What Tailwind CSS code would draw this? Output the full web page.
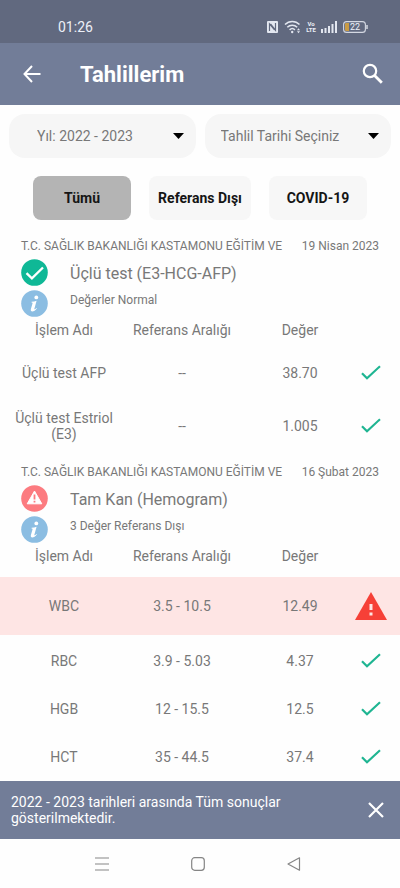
<!DOCTYPE html>
<html lang="tr">
<head>
<meta charset="utf-8">
<meta name="viewport" content="width=device-width, initial-scale=1">
<title>Tahlillerim</title>
<script src="https://cdn.jsdelivr.net/npm/@tailwindcss/browser@4"></script>
</head>
<body class="flex h-screen flex-col bg-[#fefefe] font-['Roboto','Noto_Sans',sans-serif] text-[#787878]">
<svg class="hidden" aria-hidden="true">
  <symbol id="tick" viewBox="0 0 20 16"><path d="M1 8.2l5 5L19 1.2" fill="none" stroke="#1fb592" stroke-width="2.2"/></symbol>
  <symbol id="info" viewBox="0 0 27 27"><circle cx="13.500" cy="13.500" r="13.300" fill="#8bbde2"/><circle cx="15.300" cy="7.400" r="1.900" fill="#fff"/><path d="M10.600 11.800c1.700-.1 3.300-.5 5-1.100l-2.300 8.200c-.2.800.7.500 2.100-1l.5.500c-1.500 2-3.100 3-4.600 3-1.300 0-1.800-.9-1.400-2.300l1.600-5.500c.2-.8-.1-1-1.100-1z" fill="#fff"/></symbol>
</svg>

<div class="flex h-[43px] shrink-0 items-center justify-between bg-[#61697f] pt-[10px] pr-8 pl-[58px] text-[#edf0f8]">
  <span class="text-sm">01:26</span>
  <div class="flex items-center gap-[6px]">
    <svg class="h-3 w-[11px]" viewBox="0 0 11 12"><rect width="11" height="12" rx="1" fill="#e3e7f0"/><path d="M2.500 10V2.800l5 6M8.500 2v7.200L3.500 3" fill="none" stroke="#61697f" stroke-width="1.200"/></svg>
    <svg class="h-[14px] w-[17px]" viewBox="0 0 17 14" fill="none" stroke="#e3e7f0" stroke-width="1.500"><path d="M1 4.600C5 .3 11.500.3 15.500 4.600M3.300 7.300c2.800-2.900 7.100-2.900 9.900 0M5.600 9.900c1.500-1.500 3.800-1.500 5.300 0"/><circle cx="8.200" cy="12" r="1.200" fill="#e3e7f0" stroke="none"/><path d="M13 10.300l1.500-2 1.500 2zM13 11.300l1.500 2 1.500-2z" fill="#e3e7f0" stroke="none"/></svg>
    <span class="flex w-2 flex-col items-center text-[6px] leading-[6px] font-bold"><span>Vo</span><span>LTE</span></span>
    <svg class="h-3 w-4" viewBox="0 0 16 12" fill="#e3e7f0"><path d="M0 8h2v4H0zM3.500 7h2v5h-2zM7 5h2v7H7zM10.500 3h2v9h-2zM14 0h2v12h-2z"/></svg>
    <span class="relative flex h-3 w-[25px] items-center">
      <svg class="absolute inset-0 h-3 w-[25px]" viewBox="0 0 25 12"><rect x=".6" y=".6" width="21.800" height="10.800" rx="3" fill="none" stroke="#d4d8e2" stroke-width="1.100"/><path d="M3 2h3v8H3q-1 0-1-1V3q0-1 1-1z" fill="#c99b45"/><path d="M24 4v4" stroke="#d4d8e2" stroke-width="1.500"/></svg>
      <span class="relative pl-[7px] text-[9px] leading-3">22</span>
    </span>
  </div>
</div>

<header class="flex h-[62px] shrink-0 items-center bg-[#727d98] pr-4 pl-5 text-white">
  <button aria-label="Geri" class="mr-9 flex size-6 items-center justify-center"><svg class="h-[18px] w-[18px]" viewBox="0 0 18 18" fill="none" stroke="currentColor" stroke-width="2"><path d="M17.500 9H1.500M9 1L1.500 9 9 17"/></svg></button>
  <h1 class="grow text-[22px] font-bold">Tahlillerim</h1>
  <button aria-label="Ara"><svg class="size-6" viewBox="0 0 24 24" fill="none" stroke="currentColor"><circle cx="10" cy="9" r="6.200" stroke-width="2.200"/><path d="M14.300 13.300l7.500 7.500" stroke-width="2.800"/></svg></button>
</header>

<main class="min-h-0 grow overflow-y-auto [scrollbar-width:none]">
  <div class="flex gap-[9px] px-[9px] pt-[9px]">
    <div class="relative flex-1">
      <select aria-label="Yıl" class="h-[44px] w-full appearance-none rounded-[16px] bg-[#f6f6f6] pl-7 text-sm"><option>Yıl: 2022 - 2023</option></select>
      <svg class="pointer-events-none absolute top-[19px] right-3 h-[6px] w-[11px]" viewBox="0 0 11 6"><path d="M0 0h11L5.500 6z"/></svg>
    </div>
    <div class="relative flex-1">
      <select aria-label="Tahlil Tarihi" class="h-[44px] w-full appearance-none rounded-[16px] bg-[#f6f6f6] pl-4 text-sm"><option>Tahlil Tarihi Seçiniz</option></select>
      <svg class="pointer-events-none absolute top-[19px] right-3 h-[6px] w-[11px]" viewBox="0 0 11 6"><path d="M0 0h11L5.500 6z"/></svg>
    </div>
  </div>
  <div class="flex justify-center gap-[18px] pt-[18px] text-sm font-bold text-[#151515]">
    <button class="h-[44px] w-[98px] rounded-lg bg-[#b4b4b4]">Tümü</button>
    <button class="h-[44px] w-[102px] rounded-lg bg-[#f7f7f7] whitespace-nowrap">Referans Dışı</button>
    <button class="h-[44px] w-[98px] rounded-lg bg-[#f7f7f7]">COVID-19</button>
  </div>

  <section class="pt-[18px]">
    <div class="flex justify-between px-[21px] text-xs whitespace-nowrap"><span>T.C. SAĞLIK BAKANLIĞI KASTAMONU EĞİTİM VE</span><time>19 Nisan 2023</time></div>
    <div class="flex gap-[22px] px-[21px] pt-[5px]">
      <div class="flex flex-col gap-1">
        <svg class="size-[27px]" viewBox="0 0 27 27"><circle cx="13.500" cy="13.500" r="13.300" fill="#0fb896"/><path d="M5.500 14.200l5.400 5.200L22 8.500" fill="none" stroke="#fff" stroke-width="2.300"/></svg>
        <svg class="size-[27px]"><use href="#info"/></svg>
      </div>
      <div><h2 class="pt-[3px] text-base leading-6">Üçlü test (E3-HCG-AFP)</h2><p class="pt-[6px] text-xs">Değerler Normal</p></div>
    </div>
    <table class="w-full table-fixed border-separate border-spacing-x-0 border-spacing-y-1 text-center text-sm leading-4">
      <thead><tr class="h-[26px]"><th class="w-[32%] pb-2 font-normal">İşlem Adı</th><th class="w-[27%] pb-2 font-normal">Referans Aralığı</th><th class="pb-2 pl-[22px] font-normal">Değer</th><th class="w-[58px]"></th></tr></thead>
      <tbody>
        <tr class="h-[44px]"><td>Üçlü test AFP</td><td>--</td><td class="pl-[22px]">38.70</td><td><svg class="mx-auto h-4 w-5"><use href="#tick"/></svg></td></tr>
        <tr class="h-[54px]"><td class="px-3">Üçlü test Estriol (E3)</td><td>--</td><td class="pl-[22px]">1.005</td><td><svg class="mx-auto h-4 w-5"><use href="#tick"/></svg></td></tr>
      </tbody>
    </table>
  </section>

  <section class="pt-[7px]">
    <div class="flex justify-between px-[21px] text-xs whitespace-nowrap"><span>T.C. SAĞLIK BAKANLIĞI KASTAMONU EĞİTİM VE</span><time>16 Şubat 2023</time></div>
    <div class="flex gap-[22px] px-[21px] pt-[5px]">
      <div class="flex flex-col gap-1">
        <svg class="size-[27px]" viewBox="0 0 27 27"><circle cx="13.500" cy="13.500" r="13.300" fill="#fc7b80"/><path d="M13.500 6l7.300 12.800H6.200z" fill="#fff" stroke="#fff" stroke-linejoin="round"/><path d="M13.500 9.500v5M13.500 15.700v1.800" stroke="#fc7b80" stroke-width="1.800"/></svg>
        <svg class="size-[27px]"><use href="#info"/></svg>
      </div>
      <div><h2 class="pt-[3px] text-base leading-6">Tam Kan (Hemogram)</h2><p class="pt-[6px] text-xs">3 Değer Referans Dışı</p></div>
    </div>
    <table class="w-full table-fixed border-separate border-spacing-x-0 border-spacing-y-1 text-center text-sm leading-4">
      <thead><tr class="h-[26px]"><th class="w-[32%] pb-2 font-normal">İşlem Adı</th><th class="w-[27%] pb-2 font-normal">Referans Aralığı</th><th class="pb-2 pl-[22px] font-normal">Değer</th><th class="w-[58px]"></th></tr></thead>
      <tbody>
        <tr class="h-[58px] bg-[#fee5e4]"><td>WBC</td><td>3.5 - 10.5</td><td class="pl-[22px]">12.49</td><td><svg class="mx-auto h-7 w-8" viewBox="0 0 32 28"><path d="M16 0l16 28H0z" fill="#f64037"/><path d="M16 12v6M16 20.500v3" stroke="#fee5e4" stroke-width="3"/></svg></td></tr>
        <tr class="h-[44px]"><td>RBC</td><td>3.9 - 5.03</td><td class="pl-[22px]">4.37</td><td><svg class="mx-auto h-4 w-5"><use href="#tick"/></svg></td></tr>
        <tr class="h-[44px]"><td>HGB</td><td>12 - 15.5</td><td class="pl-[22px]">12.5</td><td><svg class="mx-auto h-4 w-5"><use href="#tick"/></svg></td></tr>
        <tr class="h-[44px]"><td>HCT</td><td>35 - 44.5</td><td class="pl-[22px]">37.4</td><td><svg class="mx-auto h-4 w-5"><use href="#tick"/></svg></td></tr>
      </tbody>
    </table>
  </section>
</main>

<div class="flex h-[58px] shrink-0 items-center justify-between bg-[#727d98] pr-4 pl-[11px] text-white">
  <p class="max-w-[300px] text-sm leading-4">2022 - 2023 tarihleri arasında Tüm sonuçlar gösterilmektedir.</p>
  <button aria-label="Kapat"><svg class="size-4" viewBox="0 0 16 16" stroke="currentColor" stroke-width="2.200"><path d="M1 1l14 14M15 1L1 15"/></svg></button>
</div>
<nav class="flex h-[49px] shrink-0 items-center justify-center gap-[82px] pr-1 text-[#858585]">
  <button aria-label="Son uygulamalar"><svg class="size-[14px]" viewBox="0 0 14 14" stroke="currentColor" stroke-width="1.200"><path d="M0 1h14M0 7h14M0 13h14"/></svg></button>
  <button aria-label="Ana ekran"><svg class="size-[14px]" viewBox="0 0 14 14" fill="none" stroke="currentColor" stroke-width="1.200"><rect x=".7" y=".7" width="12.600" height="12.600" rx="3"/></svg></button>
  <button aria-label="Geri git"><svg class="size-[14px]" viewBox="0 0 14 14" fill="none" stroke="currentColor" stroke-width="1.200" stroke-linejoin="round"><path d="M1 7L12.500.8v12.400z"/></svg></button>
</nav>
</body>
</html>
